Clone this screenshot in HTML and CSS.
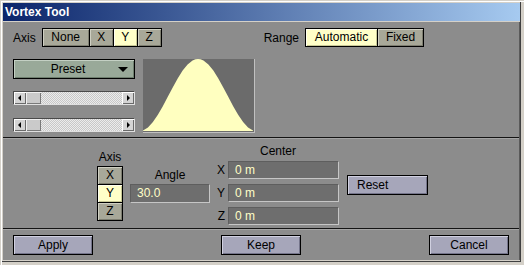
FILE: index.html
```html
<!DOCTYPE html>
<html lang="en">
<head>
    <meta charset="UTF-8">
    <meta name="viewport" content="width=device-width, initial-scale=1.0">
    <title>Vortex Tool</title>
    <link rel="stylesheet" href="styles.css">
</head>
<body>
    <div class="window">
        <div class="titlebar">Vortex Tool</div>
        <div class="panel">
            <div class="top">
                <div class="row">
                    <span class="label">Axis</span>
                    <div class="group">
                        <div class="btn w-none">None</div>
                        <div class="btn w-axis">X</div>
                        <div class="btn w-axis on">Y</div>
                        <div class="btn w-axis">Z</div>
                    </div>
                    <span class="label range-label">Range</span>
                    <div class="group">
                        <div class="btn w-auto on">Automatic</div>
                        <div class="btn w-fixed">Fixed</div>
                    </div>
                </div>
                <div class="row2">
                    <div class="controls">
                        <div class="preset">
                            <span class="preset-text">Preset</span>
                            <span class="caret"></span>
                        </div>
                        <div class="slider first">
                            <span class="arrow left"></span>
                            <span class="thumb"></span>
                            <span class="track"></span>
                            <span class="arrow right"></span>
                        </div>
                        <div class="slider second">
                            <span class="arrow left"></span>
                            <span class="thumb"></span>
                            <span class="track"></span>
                            <span class="arrow right"></span>
                        </div>
                    </div>
                    <div class="graph">
                        <svg width="110" height="72" viewBox="0 0 111 73" preserveAspectRatio="none">
                            <path fill="#ffffc0" d="M0 73 L0 72.4 L5 69.4 L10 64 L15 56.6 L20 48 L25 38.4 L30 28.8 L35 19.7 L40 11.7 L45 5.6 L50 1.6 L53 0.3 L55.5 0 L58 0.3 L61 1.6 L66 5.6 L71 11.7 L76 19.7 L81 28.8 L86 38.4 L91 48 L96 56.6 L101 64 L106 69.4 L111 72.4 L111 73 Z"/>
                        </svg>
                    </div>
                </div>
            </div>

            <div class="lower">
                <div class="axis-col">
                    <div class="label center-text">Axis</div>
                    <div class="vgroup">
                        <div class="btn vbtn">X</div>
                        <div class="btn vbtn on">Y</div>
                        <div class="btn vbtn">Z</div>
                    </div>
                </div>
                <div class="angle-col">
                    <div class="label center-text">Angle</div>
                    <div class="field angle-field">30.0</div>
                </div>
                <div class="center-col">
                    <div class="label center-text">Center</div>
                    <div class="coords">
                        <div class="coord"><span class="coord-label">X</span><div class="field coord-field">0 m</div></div>
                        <div class="coord"><span class="coord-label">Y</span><div class="field coord-field">0 m</div></div>
                        <div class="coord"><span class="coord-label">Z</span><div class="field coord-field">0 m</div></div>
                    </div>
                </div>
                <div class="push reset">Reset</div>
            </div>

            <div class="footer">
                <div class="push action">Apply</div>
                <div class="push action">Keep</div>
                <div class="push action">Cancel</div>
            </div>
        </div>
    </div>
</body>
</html>
```

FILE: styles.css
```css
body {
    margin: 0;
    background-color: #d4d0c8;
    font-family: "Liberation Sans", Arial, sans-serif;
    font-size: 12px;
    color: #000;
}
.window {
    width: 524px;
    height: 265px;
    box-sizing: border-box;
    padding: 3px 4px 5px 3px;
    background-color: #d4d0c8;
    box-shadow: inset 1px 1px 0 #d4d0c8, inset 2px 2px 0 #fff, inset -3px -3px 0 #d4d0c8, inset -4px -4px 0 #404040;
}
.titlebar {
    height: 18px;
    line-height: 18px;
    padding-left: 2px;
    margin-bottom: 1px;
    font-weight: bold;
    color: #fff;
    background: linear-gradient(to right, #0a246a, #a6caf0);
}
.panel {
    height: 238px;
    background-color: #8c8c8c;
    border-right: 1px solid #5a5a5a;
    box-sizing: border-box;
}

/* top part */
.top {
    padding: 6px 0 4px 10px;
    border-bottom: 1px solid #141414;
}
.row {
    display: flex;
    align-items: center;
    height: 19px;
}
.label {
    line-height: 14px;
}
.row .label {
    margin-right: 6px;
}
.range-label {
    margin-left: 102px;
}
.group {
    display: flex;
}
.btn {
    box-sizing: border-box;
    height: 19px;
    line-height: 17px;
    text-align: center;
    border: 1px solid #000;
    background-color: #a8a899;
    box-shadow: inset 1px 1px 0 #cfcfc2, inset -1px -1px 0 #7d7d70;
}
.group .btn + .btn {
    margin-left: -1px;
}
.btn.on {
    background-color: #ffffc8;
    box-shadow: inset 1px 1px 0 #fffff0, inset -1px -1px 0 #c8c896;
}
.w-none { width: 48px; }
.w-axis { width: 25px; }
.w-auto { width: 73px; }
.w-fixed { width: 47px; }

.row2 {
    display: flex;
    margin-top: 12px;
}
.controls {
    width: 122px;
}
.preset {
    display: flex;
    align-items: center;
    box-sizing: border-box;
    height: 20px;
    border: 1px solid #000;
    background-color: #99a999;
    box-shadow: inset 1px 1px 0 #c4d0c4, inset -1px -1px 0 #6e7e6e;
}
.preset-text {
    flex: 1;
    text-align: center;
    padding-left: 4px;
}
.caret {
    width: 0;
    height: 0;
    margin-right: 6px;
    border-left: 5px solid transparent;
    border-right: 5px solid transparent;
    border-top: 5px solid #000;
}
.slider {
    display: flex;
    box-sizing: border-box;
    height: 14px;
    border: 1px solid;
    border-color: #4a4a4a #e0e0e0 #e0e0e0 #4a4a4a;
}
.slider.first {
    margin-top: 12px;
}
.slider.second {
    margin-top: 13px;
}
.arrow {
    position: relative;
    width: 12px;
    background-color: #d4d4d4;
    box-shadow: inset 1px 1px 0 #fff, inset -1px -1px 0 #6a6a6a;
}
.arrow::after {
    content: "";
    position: absolute;
    top: 3px;
    border-top: 3px solid transparent;
    border-bottom: 3px solid transparent;
}
.arrow.left::after {
    left: 4px;
    border-right: 3px solid #000;
}
.arrow.right::after {
    left: 5px;
    border-left: 3px solid #000;
}
.thumb {
    width: 15px;
    background-color: #cacaca;
    box-shadow: inset 1px 1px 0 #f0f0f0, inset -1px -1px 0 #7a7a7a;
}
.track {
    flex: 1;
    background-color: #e2e2e2;
    background-image: repeating-conic-gradient(#c8c8c8 0 25%, #ececec 0 50%);
    background-size: 2px 2px;
}
.graph {
    box-sizing: border-box;
    width: 112px;
    height: 74px;
    margin-left: 8px;
    background-color: #6b6b6b;
    border-right: 1px solid #c0c0c0;
    border-bottom: 1px solid #c0c0c0;
}
.graph svg {
    display: block;
}

/* lower part */
.lower {
    display: flex;
    align-items: flex-start;
    height: 91px;
    box-sizing: border-box;
    border-top: 1px solid #a4a4a4;
    border-bottom: 1px solid #141414;
}
.center-text {
    text-align: center;
}
.axis-col {
    width: 26px;
    margin-left: 94px;
    margin-top: 11px;
}
.vgroup {
    margin-top: 2px;
}
.vbtn {
    height: 19px;
}
.vbtn + .vbtn {
    margin-top: -1px;
}
.angle-col {
    width: 80px;
    margin-left: 7px;
    margin-top: 29px;
}
.field {
    box-sizing: border-box;
    padding-left: 6px;
    color: #ffffc8;
    background-color: #6e6e6e;
    border: 1px solid;
    border-color: #5e5e5e #c6c6c6 #c6c6c6 #5e5e5e;
}
.angle-field {
    height: 19px;
    line-height: 17px;
    margin-top: 2px;
}
.center-col {
    width: 126px;
    margin-left: 3px;
    margin-top: 5px;
}
.center-col > .label {
    padding-left: 4px;
}
.coords {
    display: flex;
    flex-direction: column;
    gap: 5px;
    margin-top: 3px;
}
.coord {
    display: flex;
}
.coord-label {
    width: 12px;
    margin-right: 3px;
    text-align: right;
    line-height: 18px;
}
.coord-field {
    width: 111px;
    height: 18px;
    line-height: 16px;
}
.push {
    box-sizing: border-box;
    height: 20px;
    line-height: 18px;
    border: 1px solid #000;
    background-color: #a6a6ba;
    box-shadow: inset 1px 1px 0 #d0d0e0, inset -1px -1px 0 #74748a;
}
.reset {
    width: 81px;
    margin-left: 8px;
    margin-top: 36px;
    padding-left: 9px;
}

/* buttons at the bottom */
.footer {
    display: flex;
    justify-content: space-between;
    padding: 5px 10px 0 10px;
    border-top: 1px solid #a4a4a4;
}
.action {
    width: 80px;
    text-align: center;
}
```
